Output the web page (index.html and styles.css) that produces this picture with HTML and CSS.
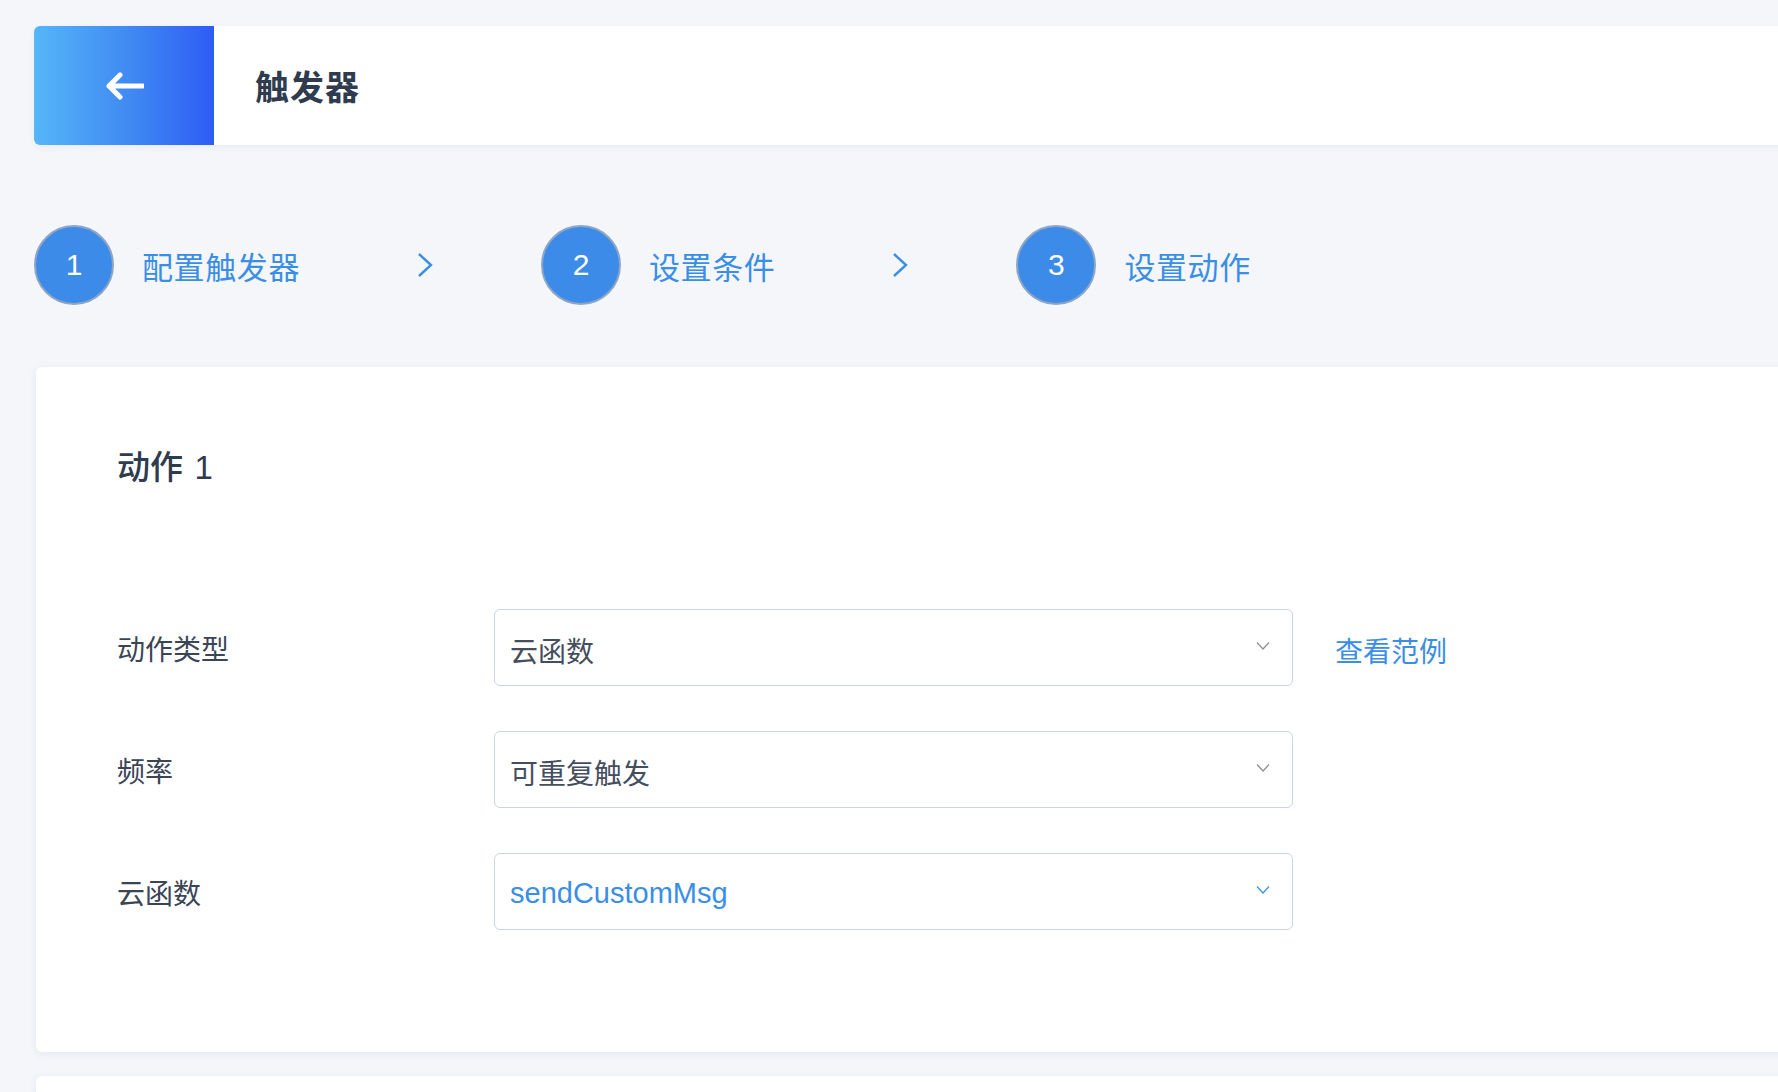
FILE: index.html
```html
<!DOCTYPE html>
<html lang="zh-CN">
<head>
<meta charset="utf-8">
<title>触发器</title>
<link rel="stylesheet" href="styles.css">
</head>
<body>
<div class="page">
  <header class="topbar">
    <div class="back">
      <svg width="40" height="28" viewBox="0 0 40 28" aria-hidden="true">
        <path d="M39 14 H5 M16 3 L5 14 L16 25" fill="none" stroke="#fff" stroke-width="5" stroke-linejoin="round" stroke-linecap="round"/>
      </svg>
    </div>
    <h1 class="title">触发器</h1>
  </header>

  <nav class="steps">
    <div class="step">
      <span class="num">1</span>
      <span class="label">配置触发器</span>
      <svg class="sep" width="18" height="26" viewBox="0 0 18 26" aria-hidden="true"><path d="M3 2 L15 13 L3 24" fill="none" stroke="#3a8ee6" stroke-width="2.4"/></svg>
    </div>
    <div class="step">
      <span class="num">2</span>
      <span class="label">设置条件</span>
      <svg class="sep" width="18" height="26" viewBox="0 0 18 26" aria-hidden="true"><path d="M3 2 L15 13 L3 24" fill="none" stroke="#3a8ee6" stroke-width="2.4"/></svg>
    </div>
    <div class="step">
      <span class="num">3</span>
      <span class="label">设置动作</span>
    </div>
  </nav>

  <section class="card">
    <h2 class="card-title">动作 <span class="card-num">1</span></h2>
    <div class="form">
      <div class="row">
        <span class="row-label">动作类型</span>
        <div class="select">
          <span class="value">云函数</span>
          <svg class="caret" width="14" height="10" viewBox="0 0 14 10" aria-hidden="true"><path d="M1 1.5 L7 8 L13 1.5" fill="none" stroke="#8a8f99" stroke-width="1.2"/></svg>
        </div>
        <a class="link">查看范例</a>
      </div>
      <div class="row">
        <span class="row-label">频率</span>
        <div class="select">
          <span class="value">可重复触发</span>
          <svg class="caret" width="14" height="10" viewBox="0 0 14 10" aria-hidden="true"><path d="M1 1.5 L7 8 L13 1.5" fill="none" stroke="#8a8f99" stroke-width="1.2"/></svg>
        </div>
      </div>
      <div class="row">
        <span class="row-label">云函数</span>
        <div class="select">
          <span class="value value-blue">sendCustomMsg</span>
          <svg class="caret" width="14" height="10" viewBox="0 0 14 10" aria-hidden="true"><path d="M1 1.5 L7 8 L13 1.5" fill="none" stroke="#3a8ee6" stroke-width="1.2"/></svg>
        </div>
      </div>
    </div>
  </section>

  <section class="card card-next"></section>
</div>
</body>
</html>
```

FILE: styles.css
```css
html, body {
  margin: 0;
  padding: 0;
  height: 100%;
  overflow: hidden;
  background: #f4f6fa;
  font-family: "Liberation Sans", "Noto Sans CJK SC", sans-serif;
}

.page {
  padding: 26px 0 0 34px;
  margin-right: -20px;
}

.topbar {
  display: flex;
  align-items: center;
  height: 119px;
  background: #fff;
  border-radius: 6px 0 0 6px;
  box-shadow: 0 2px 6px rgba(40, 60, 110, 0.06);
}

.back {
  width: 180px;
  height: 100%;
  display: flex;
  align-items: center;
  justify-content: center;
  border-radius: 6px 0 0 6px;
  background: linear-gradient(90deg, #55b6f8 0%, #3f88f2 55%, #2e5cf5 100%);
}

.title {
  margin: 0 0 0 41px;
  font-size: 34px;
  font-weight: 700;
  color: #2f3b4e;
  letter-spacing: 1px;
  font-family: "Noto Sans CJK SC", sans-serif;
}

.steps {
  display: flex;
  align-items: center;
  margin-top: 80px;
  height: 80px;
}

.step {
  display: flex;
  align-items: center;
}

.num {
  box-sizing: border-box;
  width: 80px;
  height: 80px;
  border-radius: 50%;
  background: #3d8be8;
  border: 2px solid #8ea6c6;
  color: #fff;
  font-size: 30px;
  display: flex;
  align-items: center;
  justify-content: center;
  font-family: "Liberation Sans", sans-serif;
}

.label {
  margin-left: 28px;
  font-size: 31px;
  color: #3a8ee6;
  font-family: "Noto Sans CJK SC", sans-serif;
  letter-spacing: 0.6px;
}

.sep {
  margin-left: 116px;
  margin-right: 107px;
}

.card {
  margin: 62px 0 0 2px;
  background: #fff;
  border-radius: 6px 0 0 6px;
  box-shadow: 0 2px 8px rgba(40, 60, 110, 0.07);
  padding: 74px 0 122px 81px;
}

.card-title {
  margin: 0;
  height: 48px;
  line-height: 48px;
  font-size: 33px;
  font-weight: 500;
  color: #2f3b4e;
  font-family: "Noto Sans CJK SC", sans-serif;
}

.card-num {
  font-family: "Liberation Sans", sans-serif;
  font-weight: 400;
  margin-left: 4px;
}

.form {
  margin-top: 120px;
  display: flex;
  flex-direction: column;
  gap: 45px;
}

.row {
  display: flex;
  align-items: center;
}

.row-label {
  width: 377px;
  font-size: 28px;
  color: #3a4556;
  font-family: "Noto Sans CJK SC", sans-serif;
}

.select {
  box-sizing: border-box;
  width: 799px;
  height: 77px;
  border: 1.5px solid #c9d5e2;
  border-radius: 6px;
  display: flex;
  align-items: center;
  justify-content: space-between;
  padding: 0 22px 0 15px;
}

.value {
  font-size: 28px;
  color: #444e5e;
  font-family: "Noto Sans CJK SC", sans-serif;
  margin-top: 4px;
}

.value-blue {
  color: #3a8ee6;
  font-family: "Liberation Sans", sans-serif;
  font-size: 29px;
}

.caret {
  margin-top: -4px;
}

.link {
  margin-left: 42px;
  font-size: 28px;
  color: #3a8ee6;
  font-family: "Noto Sans CJK SC", sans-serif;
  cursor: pointer;
  margin-top: 4px;
}

.card-next {
  margin-top: 24px;
  height: 200px;
  padding: 0;
}
```
